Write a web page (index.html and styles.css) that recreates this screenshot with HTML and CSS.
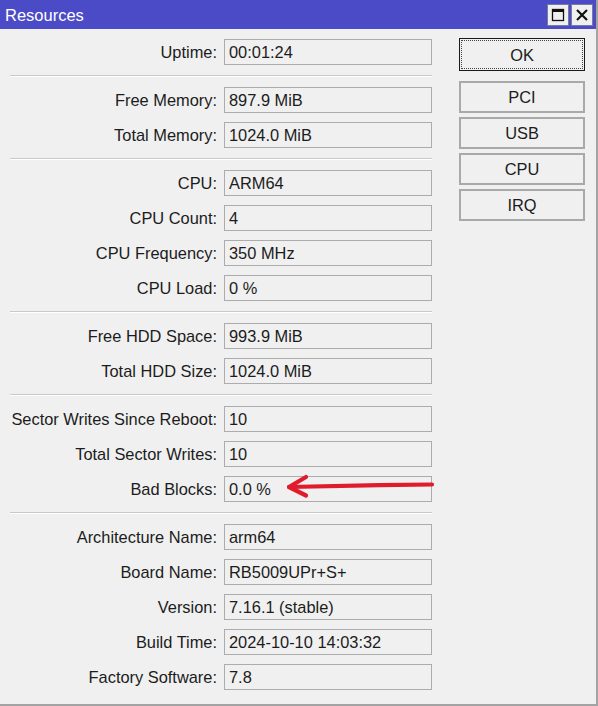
FILE: index.html
```html
<!DOCTYPE html>
<html>
<head>
<meta charset="utf-8">
<link rel="stylesheet" href="styles.css">
</head>
<body>
<div class="window">
  <div class="titlebar">
    <span class="title">Resources</span>
    <div class="tb-buttons">
      <div class="tb-btn">
        <svg width="14" height="14" viewBox="0 0 14 14"><rect x="1.5" y="1.5" width="11" height="11" fill="none" stroke="#111" stroke-width="1.3"/><rect x="1" y="1" width="12" height="3" fill="#111"/></svg>
      </div>
      <div class="tb-btn">
        <svg width="14" height="14" viewBox="0 0 14 14"><path d="M2 2 L12 12 M12 2 L2 12" stroke="#111" stroke-width="2.2"/></svg>
      </div>
    </div>
  </div>
  <div class="content">
    <div class="form">
      <div class="row"><span class="label">Uptime:</span><span class="field">00:01:24</span></div>
      <div class="sep"></div>
      <div class="row"><span class="label">Free Memory:</span><span class="field">897.9 MiB</span></div>
      <div class="row"><span class="label">Total Memory:</span><span class="field">1024.0 MiB</span></div>
      <div class="sep"></div>
      <div class="row"><span class="label">CPU:</span><span class="field">ARM64</span></div>
      <div class="row"><span class="label">CPU Count:</span><span class="field">4</span></div>
      <div class="row"><span class="label">CPU Frequency:</span><span class="field">350 MHz</span></div>
      <div class="row"><span class="label">CPU Load:</span><span class="field">0 %</span></div>
      <div class="sep"></div>
      <div class="row"><span class="label">Free HDD Space:</span><span class="field">993.9 MiB</span></div>
      <div class="row"><span class="label">Total HDD Size:</span><span class="field">1024.0 MiB</span></div>
      <div class="sep"></div>
      <div class="row"><span class="label">Sector Writes Since Reboot:</span><span class="field">10</span></div>
      <div class="row"><span class="label">Total Sector Writes:</span><span class="field">10</span></div>
      <div class="row"><span class="label">Bad Blocks:</span><span class="field">0.0 %</span></div>
      <div class="sep"></div>
      <div class="row"><span class="label">Architecture Name:</span><span class="field">arm64</span></div>
      <div class="row"><span class="label">Board Name:</span><span class="field">RB5009UPr+S+</span></div>
      <div class="row"><span class="label">Version:</span><span class="field">7.16.1 (stable)</span></div>
      <div class="row"><span class="label">Build Time:</span><span class="field">2024-10-10 14:03:32</span></div>
      <div class="row"><span class="label">Factory Software:</span><span class="field">7.8</span></div>
    </div>
    <div class="buttons">
      <button class="btn btn-default"><span>OK</span></button>
      <button class="btn">PCI</button>
      <button class="btn">USB</button>
      <button class="btn">CPU</button>
      <button class="btn">IRQ</button>
    </div>
    <svg class="arrow" width="160" height="30" viewBox="0 0 160 30">
      <path d="M147 10.5 C 100 11, 40 12, 4 13" fill="none" stroke="#e01b2c" stroke-width="4.2" stroke-linecap="round"/>
      <path d="M21 3 L4 13 L21 21.5" fill="none" stroke="#e01b2c" stroke-width="4.2" stroke-linecap="round" stroke-linejoin="round"/>
    </svg>
  </div>
</div>
</body>
</html>
```
FILE: styles.css
```css
html, body {
  margin: 0;
  padding: 0;
  background: #f0f0f0;
}
body {
  font-family: "Liberation Sans", Arial, sans-serif;
  font-size: 16.4px;
  color: #1c1c1c;
}
.window {
  width: 598px;
  height: 706px;
  box-sizing: border-box;
  border-right: 2px solid #a3a3a3;
  border-bottom: 2px solid #a3a3a3;
  background: #f0f0f0;
  display: flex;
  flex-direction: column;
}
.titlebar {
  height: 29px;
  flex: none;
  background: #4b4bc7;
  display: flex;
  align-items: center;
  justify-content: space-between;
  padding: 0 3px 0 5px;
}
.title {
  color: #ffffff;
  font-size: 16.5px;
  padding-top: 1px;
}
.tb-buttons {
  display: flex;
  gap: 2px;
  padding-top: 1px;
}
.tb-btn {
  width: 20px;
  height: 20px;
  background: #f0f0f0;
  border: 1px solid #7a7a9a;
  display: flex;
  align-items: center;
  justify-content: center;
}
.content {
  position: relative;
  flex: 1;
  display: flex;
  padding: 10px 0 0 10px;
}
.form {
  width: 422px;
  display: flex;
  flex-direction: column;
}
.row {
  display: grid;
  grid-template-columns: 207px 208px;
  column-gap: 7px;
  align-items: center;
  height: 26px;
  margin-bottom: 9px;
}
.row:last-child {
  margin-bottom: 0;
}
.row + .sep {
  margin-top: 1px;
}
.label {
  text-align: right;
  white-space: nowrap;
}
.field {
  box-sizing: border-box;
  height: 26px;
  border: 1px solid #acacac;
  background: #f0f0f0;
  padding: 0 4px;
  line-height: 24px;
  white-space: nowrap;
}
.sep {
  height: 0;
  border-top: 1px solid #c9c9c9;
  border-bottom: 1px solid #ffffff;
  margin-bottom: 10px;
}
.buttons {
  margin-left: 27px;
  width: 126px;
  display: flex;
  flex-direction: column;
  gap: 4px;
  margin-top: -1px;
}
.btn {
  box-sizing: border-box;
  height: 32px;
  width: 126px;
  background: #f0f0f0;
  border: 2px solid #a9a9a9;
  font-family: "Liberation Sans", Arial, sans-serif;
  font-size: 16.4px;
  color: #1c1c1c;
  padding: 1px 0 0;
  margin: 0;
}
.btn-default {
  height: 33px;
  border: 1px solid #1a1a1a;
  outline: 1px dotted #444;
  outline-offset: -3px;
  margin-bottom: 6px;
}
.arrow {
  position: absolute;
  left: 285px;
  top: 445px;
}
```
